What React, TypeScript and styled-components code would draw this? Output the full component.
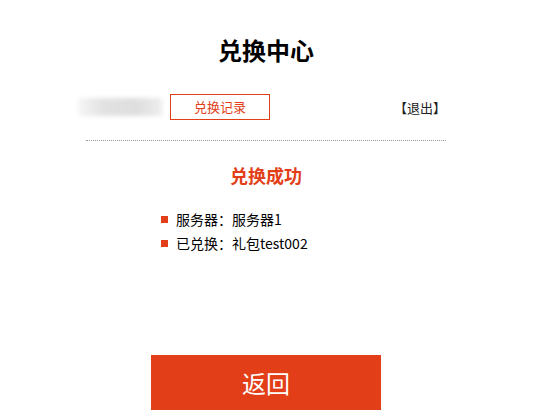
import React from "react";
import styled, { createGlobalStyle } from "styled-components";

const Global = createGlobalStyle`
  body {
    margin: 0;
    background: #fff;
    font-family: "Microsoft YaHei", "Noto Sans CJK SC", "Liberation Sans", sans-serif;
  }
`;

const Page = styled.div`
  width: 532px;
  display: flex;
  flex-direction: column;
  align-items: center;
`;

const Title = styled.h1`
  margin: 36px 0 0;
  font-size: 24px;
  line-height: 28px;
  font-weight: bold;
  color: #000;
`;

const UserBar = styled.div`
  width: 360px;
  margin-top: 30px;
  display: flex;
  align-items: center;
  height: 26px;
`;

const Blur = styled.span`
  width: 84px;
  height: 18px;
  margin-left: -8px;
  background: linear-gradient(90deg, #f6f6f6, #e2e2e2 30%, #dedede 70%, #eeeeee);
  filter: blur(2px);
`;

const RecordButton = styled.a`
  margin-left: 8px;
  width: 98px;
  height: 24px;
  border: 1px solid #e23e17;
  color: #e23e17;
  font-size: 13px;
  line-height: 24px;
  text-align: center;
  text-decoration: none;
`;

const Logout = styled.a`
  margin-left: auto;
  color: #222;
  font-size: 13px;
  font-weight: 400;
  text-decoration: none;
`;

const Divider = styled.hr`
  width: 360px;
  margin: 20px 0 0;
  border: 0;
  border-top: 1px dotted #999;
`;

const Status = styled.h2`
  margin: 22px 0 0;
  font-size: 18px;
  line-height: 24px;
  font-weight: bold;
  color: #e23e17;
`;

const List = styled.ul`
  list-style: none;
  margin: 20px 0 0;
  padding: 0 0 0 10px;
  width: 220px;
`;

const Item = styled.li`
  display: flex;
  align-items: center;
  font-size: 14px;
  line-height: 24px;
  color: #000;

  &::before {
    content: "";
    width: 7px;
    height: 7px;
    background: #e23e17;
    margin-right: 8px;
  }
`;

const BackButton = styled.button`
  margin-top: 100px;
  width: 230px;
  height: 55px;
  border: 0;
  background: #e23e17;
  color: #fff;
  font-family: inherit;
  font-size: 24px;
  cursor: pointer;
`;

export default function App() {
  return (
    <Page>
      <Global />
      <Title>兑换中心</Title>
      <UserBar>
        <Blur />
        <RecordButton href="#">兑换记录</RecordButton>
        <Logout href="#">【退出】</Logout>
      </UserBar>
      <Divider />
      <Status>兑换成功</Status>
      <List>
        <Item>服务器：服务器1</Item>
        <Item>已兑换：礼包test002</Item>
      </List>
      <BackButton>返回</BackButton>
    </Page>
  );
}
